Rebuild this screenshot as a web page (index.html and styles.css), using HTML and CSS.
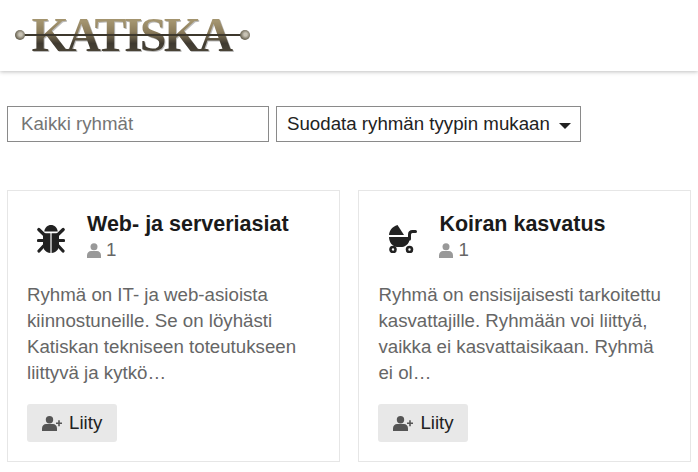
FILE: index.html
```html
<!DOCTYPE html>
<html lang="fi">
<head>
<meta charset="utf-8">
<title>Katiska</title>
<link rel="stylesheet" href="styles.css">
</head>
<body>
<header class="site-header">
  <a class="logo" href="#">
    <span class="logo-text">KATISKA</span>
    <span class="logo-rod"></span>
    <span class="logo-knob logo-knob-left"></span>
    <span class="logo-knob logo-knob-right"></span>
  </a>
</header>
<main class="content">
  <form class="filters">
    <input class="search" type="text" placeholder="Kaikki ryhmät">
    <button class="filter-select" type="button">
      <span>Suodata ryhmän tyypin mukaan</span>
      <svg class="caret" viewBox="0 0 12 6" width="12" height="6"><path d="M0 0h12L6 6z"/></svg>
    </button>
  </form>
  <section class="cards">
    <article class="card">
      <div class="card-head">
        <svg class="card-icon" viewBox="0 0 28 28" width="28" height="28">
          <path d="M7.300 6.500C7.800 2.500 10.500 0 14 0s6.200 2.500 6.700 6.500z"/>
          <path d="M6 8.200h7.400V28C9 27.600 6 24.500 6 20zM14.600 8.200H22V20c0 4.500-3 7.600-7.400 8z"/>
          <path d="M1.800 4.500 7.500 10M26.200 4.500 20.500 10M1.500 15.500h6M26.500 15.500h-6M2 26l5.500-6M26 26l-5.500-6" fill="none" stroke="#222" stroke-width="3.200" stroke-linecap="round"/>
        </svg>
        <div class="card-title">
          <h2>Web- ja serveriasiat</h2>
          <div class="members">
            <svg class="user" viewBox="0 0 14 15" width="14" height="15"><circle cx="7" cy="3.800" r="3.500"/><path d="M0 15v-2.500C0 9.500 2 8 4 8h6c2 0 4 1.500 4 4.500V15z"/></svg>
            <span>1</span>
          </div>
        </div>
      </div>
      <p class="desc">Ryhmä on IT- ja web-asioista kiinnostuneille. Se on löyhästi Katiskan tekniseen toteutukseen liittyvä ja kytkö…</p>
      <button class="join" type="button">
        <svg class="user-plus" viewBox="0 0 20 15" width="20" height="15"><circle cx="7.500" cy="3.800" r="3.700"/><path d="M0 15v-2.500C0 9.500 2 8 4 8h7c2 0 4 1.500 4 4.500V15z"/><path d="M14 6.500h6v1.600h-6zM16.200 4.300h1.600v6h-1.600z"/></svg>
        <span>Liity</span>
      </button>
    </article>
    <article class="card">
      <div class="card-head">
        <svg class="card-icon" viewBox="0 0 29 28" width="29" height="28">
          <path d="M9.500 0 16 10H1C1.200 6 4 1.500 9.500 0z"/>
          <path d="M1 12H22C22 17.500 18.500 21.500 14 22H9C4.500 21.500 1 17.500 1 12z"/>
          <path d="M21.500 14V9.500C21.500 7.500 22.500 6.500 24.500 6.500H27.500" fill="none" stroke="#222" stroke-width="3" stroke-linecap="round"/>
          <circle cx="5" cy="24.500" r="2.500" fill="none" stroke="#222" stroke-width="2.600"/>
          <circle cx="21.500" cy="24.500" r="2.500" fill="none" stroke="#222" stroke-width="2.600"/>
        </svg>
        <div class="card-title">
          <h2>Koiran kasvatus</h2>
          <div class="members">
            <svg class="user" viewBox="0 0 14 15" width="14" height="15"><circle cx="7" cy="3.800" r="3.500"/><path d="M0 15v-2.500C0 9.500 2 8 4 8h6c2 0 4 1.500 4 4.500V15z"/></svg>
            <span>1</span>
          </div>
        </div>
      </div>
      <p class="desc">Ryhmä on ensisijaisesti tarkoitettu kasvattajille. Ryhmään voi liittyä, vaikka ei kasvattaisikaan. Ryhmä ei ol…</p>
      <button class="join" type="button">
        <svg class="user-plus" viewBox="0 0 20 15" width="20" height="15"><circle cx="7.500" cy="3.800" r="3.700"/><path d="M0 15v-2.500C0 9.500 2 8 4 8h7c2 0 4 1.500 4 4.500V15z"/><path d="M14 6.500h6v1.600h-6zM16.200 4.300h1.600v6h-1.600z"/></svg>
        <span>Liity</span>
      </button>
    </article>
  </section>
</main>
</body>
</html>
```
FILE: styles.css
```css
* { box-sizing: border-box; }
html, body { margin: 0; padding: 0; }
body {
  background: #fff;
  color: #222;
  font-family: "Liberation Sans", Arial, sans-serif;
  font-size: 18.700px;
  height: 472px;
  overflow: hidden;
}
.site-header {
  height: 71px;
  background: #fff;
  box-shadow: 0 1px 4px rgba(0,0,0,.25);
  padding: 18px 0 0 15px;
}
.logo {
  position: relative;
  display: block;
  width: 235px;
  height: 34px;
  text-decoration: none;
}
.logo-text {
  display: block;
  padding-right: 3px;
  text-align: center;
  font-family: "Liberation Serif", serif;
  font-weight: 700;
  font-size: 48px;
  line-height: 34px;
  letter-spacing: -2.700px;
  background: linear-gradient(#a3946f 10%, #8c7d5c 40%, #3f3a30 75%, #4a4437);
  -webkit-background-clip: text;
  background-clip: text;
  color: transparent;
  filter: drop-shadow(1px 1px 0 #bbb);
}
.logo-rod {
  position: absolute;
  left: 4px;
  right: 4px;
  top: 16px;
  height: 1.500px;
  background: #3d382d;
}
.logo-knob {
  position: absolute;
  top: 12px;
  width: 10px;
  height: 10px;
  border-radius: 50%;
  background: radial-gradient(circle at 55% 45%, #c8c3b5 20%, #57513f 75%);
}
.logo-knob-left { left: 0; }
.logo-knob-right { right: 0; }
.content { padding: 35px 7px 0; }
.filters { display: flex; gap: 7px; }
.search {
  width: 262px;
  height: 36px;
  border: 1px solid #8a8a8a;
  padding: 0 13px;
  font: 18.700px "Liberation Sans", Arial, sans-serif;
  color: #222;
  background: #fff;
  outline: none;
}
.search::placeholder { color: #757575; opacity: 1; }
.filter-select {
  width: 305px;
  height: 36px;
  border: 1px solid #8a8a8a;
  background: #fff;
  padding: 0 9px 0 10px;
  display: flex;
  align-items: center;
  justify-content: space-between;
  font: 18.700px "Liberation Sans", Arial, sans-serif;
  color: #222;
}
.caret { fill: #222; margin-top: 3px; }
.cards {
  display: grid;
  grid-template-columns: 333.400px 333px;
  gap: 18px;
  margin-top: 48px;
}
.card {
  height: 272px;
  border: 1px solid #e6e6e6;
  padding: 20px 20px 0 19px;
}
.card-head { display: flex; align-items: flex-start; }
.card-icon { fill: #222; margin: 14px 0 0 10px; flex: none; }
.card-title { margin-left: 22px; }
.card-title h2 {
  margin: 0;
  font-size: 21.500px;
  line-height: 27px;
  font-weight: 700;
  color: #1a1a1a;
}
.members {
  display: flex;
  align-items: center;
  gap: 5px;
  height: 24px;
  color: #666;
  font-size: 18.700px;
}
.user { fill: #999; }
.desc {
  margin: 20px 0 0;
  color: #666;
  font-size: 18.700px;
  line-height: 26px;
  height: 104px;
}
.join {
  display: flex;
  align-items: center;
  gap: 7px;
  width: 90px;
  height: 38px;
  margin-top: 18px;
  padding: 0 0 0 15px;
  border: none;
  border-radius: 3px;
  background: #e8e8e8;
  color: #222;
  font: 18.700px "Liberation Sans", Arial, sans-serif;
}
.user-plus { fill: #555; }
```
